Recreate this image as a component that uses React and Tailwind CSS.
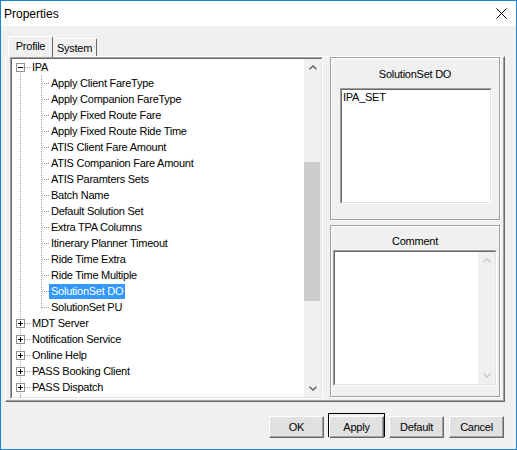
const FONT = "font-['Liberation_Sans',Arial,sans-serif]"

const CHILDREN = [
  'Apply Client FareType',
  'Apply Companion FareType',
  'Apply Fixed Route Fare',
  'Apply Fixed Route Ride Time',
  'ATIS Client Fare Amount',
  'ATIS Companion Fare Amount',
  'ATIS Paramters Sets',
  'Batch Name',
  'Default Solution Set',
  'Extra TPA Columns',
  'Itinerary Planner Timeout',
  'Ride Time Extra',
  'Ride Time Multiple',
  'SolutionSet DO',
  'SolutionSet PU',
]

const ROOTS = ['MDT Server', 'Notification Service', 'Online Help', 'PASS Booking Client', 'PASS Dispatch']

const SELECTED = 'SolutionSet DO'

function VDots({ x, y1 = 0, y2 = 16 }) {
  return <line x1={x + 0.5} x2={x + 0.5} y1={y1} y2={y2} stroke="#a0a0a0" strokeDasharray="1 1" />
}

function HDots({ x1, x2, y = 8 }) {
  return <line x1={x1} x2={x2} y1={y + 0.5} y2={y + 0.5} stroke="#a0a0a0" strokeDasharray="1 1" />
}

function Expander({ open }) {
  return (
    <g shapeRendering="crispEdges">
      <rect x={4.5} y={4.5} width={8} height={8} fill="#fff" stroke="#919191" />
      <line x1={6} x2={11} y1={8.5} y2={8.5} stroke="#000" />
      {!open && <line x1={8.5} x2={8.5} y1={6} y2={11} stroke="#000" />}
    </g>
  )
}

function Label({ text }) {
  const sel = text === SELECTED
  return (
    <span
      className={`px-[2px] h-[15px] leading-[15px] whitespace-nowrap ${
        sel ? 'bg-[#3399ff] text-white' : 'text-black'
      }`}
    >
      {text}
    </span>
  )
}

function RootRow({ text, open, first }) {
  return (
    <div className="flex items-center h-4 shrink-0">
      <svg width="18" height="16" className="shrink-0" shapeRendering="crispEdges">
        {!first && <VDots x={8} y1={0} y2={4} />}
        <VDots x={8} y1={12} y2={16} />
        <HDots x1={13} x2={18} />
        <Expander open={open} />
      </svg>
      <Label text={text} />
    </div>
  )
}

function ChildRow({ text, last }) {
  return (
    <div className="flex items-center h-4 shrink-0">
      <svg width="37" height="16" className="shrink-0" shapeRendering="crispEdges">
        <VDots x={8} />
        <VDots x={29} y1={0} y2={last ? 9 : 16} />
        <HDots x1={30} x2={37} />
      </svg>
      <Label text={text} />
    </div>
  )
}

function Chevron({ down, color = '#606060' }) {
  return (
    <svg width="8" height="5" viewBox="0 0 8 5">
      <polyline
        points={down ? '0.5,0.8 4,4 7.5,0.8' : '0.5,4.2 4,1 7.5,4.2'}
        fill="none"
        stroke={color}
        strokeWidth="1.5"
      />
    </svg>
  )
}

function ScrollBar({ disabled }) {
  const c = disabled ? '#c8c8c8' : '#606060'
  return (
    <div className="w-[17px] h-full bg-[#f0f0f0] flex flex-col shrink-0">
      <div className="h-[17px] flex items-center justify-center shrink-0">
        <Chevron color={c} />
      </div>
      <div className="flex-1">
        {!disabled && <div className="mt-[86px] h-[139px] w-[16px] bg-[#cdcdcd]" />}
      </div>
      <div className="h-[17px] flex items-center justify-center shrink-0">
        <Chevron down color={c} />
      </div>
    </div>
  )
}

function Sunken({ className = '', children }) {
  return (
    <div className={`border border-t-[#a0a0a0] border-l-[#a0a0a0] border-b-white border-r-white ${className}`}>
      <div className="w-full h-full border border-t-[#696969] border-l-[#696969] border-b-[#e3e3e3] border-r-[#e3e3e3] bg-white overflow-hidden">
        {children}
      </div>
    </div>
  )
}

function Button({ children, isDefault }) {
  return (
    <div className={`w-[57px] h-[24px] border ${isDefault ? 'border-black' : 'border-transparent'}`}>
      <button className="w-full h-full bg-[#e1e1e1] text-[11px] font-normal text-black border border-t-white border-l-white border-b-[#696969] border-r-[#696969] shadow-[inset_-1px_-1px_0_#a0a0a0]">
        {children}
      </button>
    </div>
  )
}

function GroupBox({ className = '', children }) {
  return (
    <div className={`border border-[#a0a0a0] shadow-[inset_1px_1px_0_#fff,1px_1px_0_#fff] ${className}`}>
      {children}
    </div>
  )
}

export default function App() {
  return (
    <div className={`w-[517px] h-[450px] border border-[#1883d7] bg-[#f0f0f0] flex flex-col overflow-hidden ${FONT}`}>
      {/* caption */}
      <div className="h-[25px] bg-white flex items-center justify-between pl-[3px] pr-[9px] shrink-0">
        <span className="text-[12px] text-black">Properties</span>
        <svg width="11" height="11" viewBox="0 0 11 11">
          <path d="M0.5 0.5 L10.5 10.5 M10.5 0.5 L0.5 10.5" stroke="#000" strokeWidth="1" />
        </svg>
      </div>

      <div className="pl-[4px] pt-[10px] flex flex-col tracking-[-0.25px]">
        {/* tab strip */}
        <div className="flex items-end h-[20px] pl-[3px] text-[11px] text-black">
          <div className="relative z-10 w-[45px] h-[21px] -mb-px bg-[#f0f0f0] border-l border-t border-r border-l-white border-t-white border-r-[#696969] rounded-t-[2px] flex justify-center pt-[3px] leading-[13px]">
            Profile
          </div>
          <div className="w-[44px] h-[18px] bg-[#f0f0f0] border-t border-r border-t-white border-r-[#696969] rounded-t-[2px] flex justify-center pt-[3px] leading-[13px]">
            System
          </div>
        </div>

        {/* tab page */}
        <div className="w-[500px] h-[346px] border border-t-white border-l-white border-b-[#696969] border-r-[#696969] shadow-[inset_-1px_-1px_0_#a0a0a0] flex pl-[4px] text-[11px]">
          <Sunken className="w-[313px] h-[342px]">
            <div className="flex h-full">
              <div className="flex-1 flex flex-col overflow-hidden">
                <RootRow text="IPA" open first />
                {CHILDREN.map((c, i) => (
                  <ChildRow key={c} text={c} last={i === CHILDREN.length - 1} />
                ))}
                {ROOTS.map(r => (
                  <RootRow key={r} text={r} />
                ))}
                <div className="flex-1 ml-[8px] border-l border-dotted border-[#a0a0a0]" />
              </div>
              <ScrollBar />
            </div>
          </Sunken>

          <div className="ml-[7px] flex flex-col gap-[5px]">
            <GroupBox className="w-[170px] h-[163px] flex flex-col">
              <div className="mt-[10px] text-center leading-[13px] text-black">SolutionSet DO</div>
              <Sunken className="ml-[9px] mt-[7px] w-[152px] h-[116px]">
                <div className="pl-[1px] pt-[1px] leading-[13px] text-black">IPA_SET</div>
              </Sunken>
            </GroupBox>

            <GroupBox className="w-[170px] h-[172px] flex flex-col">
              <div className="mt-[9px] text-center leading-[13px] text-black">Comment</div>
              <Sunken className="ml-[2px] mt-[2px] w-[164px] h-[136px]">
                <div className="flex h-full justify-end">
                  <ScrollBar disabled />
                </div>
              </Sunken>
            </GroupBox>
          </div>
        </div>

        {/* dialog buttons */}
        <div className="mt-[11px] w-[500px] flex justify-end gap-[3px]">
          <Button>OK</Button>
          <Button isDefault>Apply</Button>
          <Button>Default</Button>
          <Button>Cancel</Button>
        </div>
      </div>
    </div>
  )
}
